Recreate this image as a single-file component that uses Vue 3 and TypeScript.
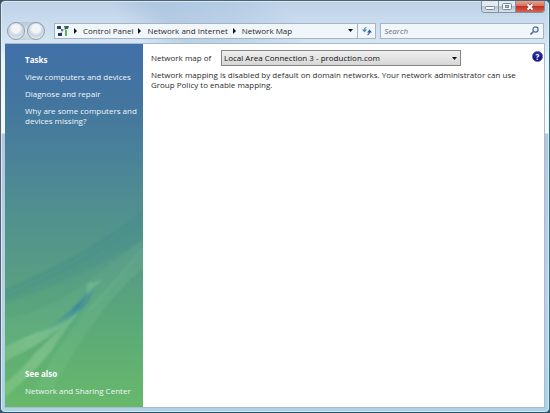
<script setup lang="ts">
import { ref } from 'vue'

const crumbs: string[] = ['Control Panel', 'Network and Internet', 'Network Map']
const tasks: string[] = [
  'View computers and devices',
  'Diagnose and repair',
  'Why are some computers and devices missing?',
]
const connections: string[] = ['Local Area Connection 3 - production.com']
const selected = ref(connections[0])
const query = ref('')
</script>

<template>
  <div class="window">
    <header class="titlebar">
      <div class="controls">
        <button type="button" class="control" aria-label="Minimize">
          <svg width="12" height="8" viewBox="0 0 12 8"><rect x="1.5" y="3.5" width="9" height="3" rx="1" fill="#f4f7fa" stroke="#7d8a99" /></svg>
        </button>
        <button type="button" class="control" aria-label="Maximize">
          <svg width="12" height="8" viewBox="0 0 12 8"><rect x="1.5" y=".5" width="9" height="6" rx="1" fill="#f4f7fa" stroke="#7d8a99" /><rect x="4.5" y="2.5" width="3" height="2" fill="#b5c0cd" stroke="#7d8a99" /></svg>
        </button>
        <button type="button" class="control close" aria-label="Close">
          <svg width="10" height="8" viewBox="0 0 10 8"><path d="M2.5 1.5l5 5M7.5 1.5l-5 5" stroke="#8c4a45" stroke-width="3.2" /><path d="M2.5 1.5l5 5M7.5 1.5l-5 5" stroke="#fff" stroke-width="1.8" /></svg>
        </button>
      </div>
    </header>

    <nav class="toolbar" aria-label="Location">
      <div class="history">
        <button type="button" class="round" aria-label="Back"></button>
        <button type="button" class="round" aria-label="Forward"></button>
      </div>
      <div class="address">
        <svg class="map-icon" width="12" height="12" viewBox="0 0 12 12">
          <path d="M3 3l3 2.5L9.5 2M6 5.5L3 9M8.5 4v7" fill="none" stroke="#8fa3ae" />
          <rect x="0" y="1" width="4" height="3" fill="#27474f" />
          <rect x="1" y="8" width="4" height="3" fill="#24395e" />
          <rect x="4" y="4" width="2" height="2" fill="#4d7fa8" />
          <path d="M7 1h5l-1 3H8z" fill="#33684a" />
          <path d="M8 5h2v6H8z" fill="#5fb558" />
        </svg>
        <ol class="crumbs">
          <li v-for="crumb in crumbs" :key="crumb">
            <svg width="3" height="6" viewBox="0 0 3 6"><path d="M0 0l3 3-3 3z" fill="#111" /></svg>
            <a href="#">{{ crumb }}</a>
          </li>
        </ol>
        <button type="button" class="drop" aria-label="Previous locations">
          <svg width="5" height="3" viewBox="0 0 5 3"><path d="M0 0h5L2.5 3z" fill="#111" /></svg>
        </button>
        <button type="button" class="refresh" aria-label="Refresh">
          <svg width="10" height="10" viewBox="0 0 10 10">
            <path d="M4.5 1.5Q2.5 1.5 2.5 4" fill="none" stroke="#4d9cc0" stroke-width="1.2" />
            <path d="M0 3.5h5L2.5 6.5z" fill="#3d8db5" />
            <path d="M5.5 9Q7.5 8.5 7.5 6" fill="none" stroke="#2b5f9e" stroke-width="1.2" />
            <path d="M5 6.5h5L7.5 3.5z" fill="#2b5f9e" />
          </svg>
        </button>
      </div>
      <label class="search">
        <input v-model="query" type="text" placeholder="Search" aria-label="Search" />
        <svg width="9" height="9" viewBox="0 0 9 9"><circle cx="5.5" cy="3.5" r="2.6" fill="#e4f0f8" stroke="#4b7391" stroke-width="1.2" /><path d="M3.5 5.5L.5 8.5" stroke="#4b7391" stroke-width="1.6" /></svg>
      </label>
    </nav>

    <div class="body">
      <aside class="sidebar">
        <svg class="aurora" viewBox="0 0 138 208" preserveAspectRatio="none" aria-hidden="true">
          <defs>
            <linearGradient id="ray" x1="1" y1="0" x2="0" y2="1">
              <stop offset="0" stop-color="#b5e4b8" stop-opacity=".15" />
              <stop offset=".6" stop-color="#b9e6bb" stop-opacity=".3" />
              <stop offset="1" stop-color="#c2ecb0" stop-opacity=".2" />
            </linearGradient>
            <linearGradient id="streak" x1="1" y1="0" x2="0" y2="1">
              <stop offset="0" stop-color="#2f7f9e" stop-opacity=".1" />
              <stop offset=".4" stop-color="#2f7fa2" stop-opacity=".7" />
              <stop offset="1" stop-color="#4ba58a" stop-opacity="0" />
            </linearGradient>
            <filter id="soft"><feGaussianBlur stdDeviation="1" /></filter>
          </defs>
          <g filter="url(#soft)">
            <path d="M138 10Q88 52 0 90V104Q86 74 138 40z" fill="#3d8793" opacity=".2" />
            <path d="M138 12Q88 54 0 92M138 20Q90 60 0 98" fill="none" stroke="#357c86" stroke-width="1" opacity=".3" />
            <path d="M138 40Q108 62 80 84Q50 108 0 120V146Q70 130 96 102Q120 72 138 50z" fill="#79c296" opacity=".14" />
            <path d="M138 46Q115 76 95 96Q60 132 30 190H48Q90 110 138 68z" fill="#8ed6a0" opacity=".14" />
            <path d="M72 108Q54 126 30 134L0 147V162Q36 146 58 126z" fill="url(#ray)" />
            <path d="M93 82Q84 108 66 118Q50 130 28 136Q58 120 74 102Q82 92 93 82z" fill="url(#streak)" />
            <path d="M93 84Q76 108 66 118Q50 134 30 154Q12 176 0 184V198Q30 172 46 152Q64 126 93 84z" fill="url(#ray)" />
            <path d="M82 86l3-4 4 1 8-3-15 16z" fill="#9bdba4" opacity=".3" />
          </g>
        </svg>
        <section class="group">
          <h2>Tasks</h2>
          <a v-for="task in tasks" :key="task" href="#">{{ task }}</a>
        </section>
        <section class="group">
          <h2>See also</h2>
          <a href="#">Network and Sharing Center</a>
        </section>
      </aside>

      <main class="content">
        <div class="picker">
          <label for="connection">Network map of</label>
          <div class="select">
            <select id="connection" v-model="selected">
              <option v-for="item in connections" :key="item">{{ item }}</option>
            </select>
            <svg class="arrow" width="5" height="3" viewBox="0 0 5 3"><path d="M0 0h5L2.5 3z" fill="#111" /></svg>
          </div>
          <button type="button" class="help" aria-label="Help">?</button>
        </div>
        <p>
          Network mapping is disabled by default on domain networks. Your network administrator can use
          Group Policy to enable mapping.
        </p>
      </main>
    </div>
  </div>
</template>

<style>
body {
  margin: 0;
  background: #2c5368;
}
</style>

<style scoped>
.window {
  box-sizing: border-box;
  min-height: 100vh;
  display: flex;
  flex-direction: column;
  padding: 0 4px 4px;
  border: 1px solid #4f6672;
  border-right-color: #2b7183;
  border-bottom-color: #2c5368;
  border-radius: 5px;
  background:
    linear-gradient(50deg, #9cb9d800 0 24%, #9cb9d877 32%, #9fbddd55 44%, #dce9f500 54%) 0 0 / 100% 42px no-repeat,
    linear-gradient(#bdd1e7 0, #c9dbed 20px, #d6e6f3 42px, #edf5fb 60px, #f6fafd 132px, #b3c7df 133px, #bcd1e5 300px, #a9d3e9 100%);
  box-shadow: inset 0 0 0 1px #e8f5fbaa;
  color: #2b2b2b;
  font: 8px/10px 'Open Sans', 'Noto Sans', sans-serif;
}

button,
input,
select {
  margin: 0;
  padding: 0;
  font: inherit;
  color: inherit;
}

a {
  color: inherit;
  text-decoration: none;
}

svg {
  display: block;
  flex: none;
}

.titlebar {
  height: 20px;
  display: flex;
  justify-content: flex-end;
}

.controls {
  height: 12px;
  display: flex;
  box-sizing: border-box;
  border: 1px solid #8391a0;
  border-top: 0;
  border-radius: 0 0 4px 4px;
  overflow: hidden;
}

.control {
  width: 17px;
  display: grid;
  place-items: center;
  border: 0;
  border-right: 1px solid #8391a0;
  background: linear-gradient(#e3eaf1 45%, #b6c3d2 50%, #d5dfe9);
}

.close {
  width: 28px;
  border-right: 0;
  background: linear-gradient(#e6a394 0, #d8705f 45%, #bd3424 50%, #d9604b);
}

.toolbar {
  height: 22px;
  display: flex;
  align-items: center;
  box-sizing: border-box;
  padding: 0 1px 3px 2px;
}

.history {
  display: flex;
  gap: 2px;
  margin-right: 9px;
  border-radius: 9px;
  background: linear-gradient(#b6c6d7, #dae5ee 50%, #c4d3e0);
}

.round {
  width: 18px;
  height: 18px;
  border: 1px solid #8d9eae;
  border-radius: 50%;
  background: radial-gradient(circle at 50% 35%, #f1f5f8 0 30%, #c8d3de 55%, #eaf1f6 85%);
}

.address,
.search {
  height: 16px;
  display: flex;
  align-items: center;
  box-sizing: border-box;
  border: 1px solid #a4b4c4;
  background: #f1f6fb;
}

.address {
  flex: 1;
  margin-right: 4px;
  padding-left: 2px;
}

.crumbs {
  flex: 1;
  display: flex;
  margin: 0;
  padding: 0;
  list-style: none;
  white-space: nowrap;
}

.crumbs li {
  display: flex;
  align-items: center;
  gap: 6px;
  margin-left: 5px;
}

.drop,
.refresh {
  width: 13px;
  height: 14px;
  display: grid;
  place-items: center;
  border: 0;
  background: none;
}

.refresh {
  width: 18px;
  border-left: 1px solid #a4b4c4;
}

.search {
  flex: 0 1 30.5%;
  padding: 0 4px 0 3px;
}

.search input {
  flex: 1;
  min-width: 0;
  border: 0;
  outline: 0;
  background: none;
}

.search input::placeholder {
  color: #686f76;
  font-style: italic;
  opacity: 1;
}

.body {
  flex: 1;
  display: flex;
  border: solid #a9bac8;
  border-width: 1px 1px 1px 0;
  background: #fff;
}

.sidebar {
  position: relative;
  flex: 0 0 25.6%;
  display: flex;
  flex-direction: column;
  justify-content: space-between;
  box-sizing: border-box;
  padding: 11px 4px 11px 20px;
  background: linear-gradient(#4070a8 0, #43759f 16%, #4a8398 32%, #50908f 46%, #569a86 60%, #5aa87a 76%, #68b86b 100%);
  color: #eef6f8;
}

.aurora {
  position: absolute;
  left: 0;
  bottom: 0;
  width: 100%;
  height: 57%;
}

.group {
  position: relative;
  display: flex;
  flex-direction: column;
  gap: 7px;
}

h2 {
  margin: 0;
  font: inherit;
  font-weight: 700;
  color: #fff;
}

.content {
  flex: 1;
  padding: 6px 0 0 8px;
}

.picker {
  display: flex;
  align-items: center;
}

.picker label {
  flex: 0 0 70px;
}

.select {
  position: relative;
  flex: 0 1 240px;
}

.select select {
  width: 100%;
  height: 16px;
  display: block;
  box-sizing: border-box;
  padding: 0 14px 0 2px;
  border: 1px solid #858585;
  border-radius: 0;
  appearance: none;
  background: linear-gradient(#efefef, #e4e4e4 50%, #d6d6d6);
  color: #111;
}

.arrow {
  position: absolute;
  right: 4px;
  top: 7px;
  pointer-events: none;
}

.help {
  width: 11px;
  height: 11px;
  margin: 0 1px 4px auto;
  border: 1px solid #53539e;
  border-radius: 50%;
  background: radial-gradient(circle at 50% 30%, #3c3cc4, #0b0b7c 70%);
  color: #fff;
  font-weight: 700;
  line-height: 9px;
}

p {
  margin: 4px 20px 0 0;
}
</style>
